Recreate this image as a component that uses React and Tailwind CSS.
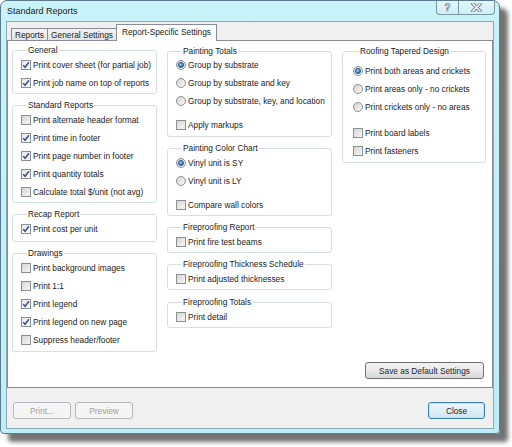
import React from "react";

function Check({ checked }) {
  return (
    <span
      className={
        "w-[10px] h-[10px] border border-[#8e8f8f] flex items-center justify-center shrink-0 " +
        (checked
          ? "bg-gradient-to-br from-[#e6e6e6] to-[#fbfbfb]"
          : "bg-gradient-to-br from-[#d6d6d6] to-[#f6f6f6]")
      }
    >
      {checked && (
        <svg width="8" height="8" viewBox="0 0 8 8">
          <path d="M1.2 4.2 L3.1 6.3 L6.9 1.3" stroke="#3a5095" strokeWidth="1.5" fill="none" />
        </svg>
      )}
    </span>
  );
}

function Radio({ checked }) {
  return (
    <span className="w-[10px] h-[10px] rounded-full border border-[#8e8f8f] bg-gradient-to-br from-[#d4d4d4] to-[#f8f8f8] flex items-center justify-center shrink-0">
      {checked && (
        <span className="w-[6px] h-[6px] rounded-full border border-[#1d4f8c] bg-[radial-gradient(circle_at_40%_35%,#a6e0ff,#2a72c4_70%)]" />
      )}
    </span>
  );
}

function Row({ radio, checked, children, className = "" }) {
  return (
    <div className={"h-[18px] flex items-center gap-[2px] " + className}>
      {radio ? <Radio checked={checked} /> : <Check checked={checked} />}
      <span className="whitespace-nowrap">{children}</span>
    </div>
  );
}

function Group({ title, className = "", children }) {
  return (
    <fieldset className={"border border-[#d5dfe5] rounded-[3px] min-w-0 " + className}>
      <legend className="ml-[6px] px-[1px] leading-[10px]">{title}</legend>
      {children}
    </fieldset>
  );
}

export default function App() {
  return (
    <div className="w-[512px] h-[447px] bg-white font-['Liberation_Sans',Arial,sans-serif] text-[8.3px] text-[#222222]">
      <div className="w-[500px] h-[434px] rounded-t-[7px] rounded-b-[4px] border border-[#5a7b8b] bg-gradient-to-b from-[#c9f2f9] to-[#bdeef7] shadow-[8px_8px_4px_rgba(0,0,0,0.55)] flex flex-col">
        {/* Title bar */}
        <div className="h-[20px] flex items-start justify-between shrink-0">
          <span className="ml-[6px] mt-[5px] text-[9px] leading-[11px] text-[#1b1b1b]">Standard Reports</span>
          <div className="mr-[4px] flex h-[14px] border border-t-0 border-[#7a97a3] rounded-b-[4px] bg-gradient-to-b from-[#e2f7fb] to-[#cdeff6] overflow-hidden">
            <div className="w-[22px] h-full flex items-center justify-center border-r border-[#7a97a3]">
              <span className="text-[10px] leading-[10px] font-bold text-[#f2f6f7] [-webkit-text-stroke:0.6px_#6b777e]">?</span>
            </div>
            <div className="w-[35px] h-full flex items-center justify-center">
              <svg width="11" height="9" viewBox="0 0 11 9">
                <path d="M2 1 L9 8 M9 1 L2 8" stroke="#6b777e" strokeWidth="3.2" strokeLinecap="square" fill="none" />
                <path d="M2 1 L9 8 M9 1 L2 8" stroke="#f2f6f7" strokeWidth="1.6" strokeLinecap="square" fill="none" />
              </svg>
            </div>
          </div>
        </div>

        {/* Client area */}
        <div className="mx-[5px] mb-[4px] flex-1 border border-[#8ba8b6] bg-[#f0f0f0] flex flex-col min-h-0">
          {/* Tab strip */}
          <div className="h-[18px] pl-[4px] flex items-end shrink-0">
            <div className="w-[37px] h-[12px] border border-b-0 border-[#898c95] bg-gradient-to-b from-[#f4f4f4] to-[#e3e3e3] flex items-center justify-center leading-[10px]">
              Reports
            </div>
            <div className="-ml-px w-[70px] h-[12px] border border-b-0 border-[#898c95] bg-gradient-to-b from-[#f4f4f4] to-[#e3e3e3] flex items-center justify-center leading-[10px]">
              General Settings
            </div>
            <div className="-ml-px relative z-10 -mb-px w-[101px] h-[17px] border border-b-0 border-[#898c95] bg-white flex items-center justify-center leading-[10px] pb-[2px]">
              Report-Specific Settings
            </div>
          </div>

          {/* Panel */}
          <div className="flex-1 border border-[#898c95] bg-white pl-[4px] pt-[5px] pb-[8px] flex gap-[10px] min-h-0">
            {/* Left column */}
            <div className="w-[145px] flex flex-col gap-[6px] -mt-px">
              <Group title="General" className="pl-[8px] pt-[1px] pb-[1px]">
                <Row checked>Print cover sheet (for partial job)</Row>
                <Row checked>Print job name on top of reports</Row>
              </Group>
              <Group title="Standard Reports" className="pl-[8px] pt-[1px] pb-[1px]">
                <Row>Print alternate header format</Row>
                <Row checked>Print time in footer</Row>
                <Row checked>Print page number in footer</Row>
                <Row checked>Print quantity totals</Row>
                <Row>Calculate total $/unit (not avg)</Row>
              </Group>
              <Group title="Recap Report" className="pl-[8px] pt-[1px] pb-[3px]">
                <Row checked>Print cost per unit</Row>
              </Group>
              <Group title="Drawings" className="pl-[8px] pt-[1px] pb-[2px]">
                <Row>Print background images</Row>
                <Row>Print 1:1</Row>
                <Row checked>Print legend</Row>
                <Row checked>Print legend on new page</Row>
                <Row>Suppress header/footer</Row>
              </Group>
            </div>

            {/* Middle column */}
            <div className="w-[165px] flex flex-col gap-[6px]">
              <Group title="Painting Totals" className="pl-[8px] pt-0 pb-[2px]">
                <Row radio checked>Group by substrate</Row>
                <Row radio>Group by substrate and key</Row>
                <Row radio>Group by substrate, key, and location</Row>
                <Row className="mt-[6px]">Apply markups</Row>
              </Group>
              <Group title="Painting Color Chart" className="pl-[8px] pt-[1px] pb-[1px]">
                <Row radio checked>Vinyl unit is SY</Row>
                <Row radio>Vinyl unit is LY</Row>
                <Row className="mt-[6px]">Compare wall colors</Row>
              </Group>
              <Group title="Fireproofing Report" className="pl-[8px] pt-[1px] pb-[1px]">
                <Row>Print fire test beams</Row>
              </Group>
              <Group title="Fireproofing Thickness Schedule" className="pl-[8px] pt-[1px] pb-[1px]">
                <Row>Print adjusted thicknesses</Row>
              </Group>
              <Group title="Fireproofing Totals" className="pl-[8px] pt-[1px] pb-[1px] mt-px">
                <Row>Print detail</Row>
              </Group>
            </div>

            {/* Right column */}
            <div className="w-[144px] flex flex-col justify-between">
              <Group title="Roofing Tapered Design" className="pl-[10px] pt-[6px] pb-[2px]">
                <Row radio checked>Print both areas and crickets</Row>
                <Row radio>Print areas only - no crickets</Row>
                <Row radio>Print crickets only - no areas</Row>
                <Row className="mt-[8px]">Print board labels</Row>
                <Row>Print fasteners</Row>
              </Group>
              <button className="self-end mr-[2px] w-[119px] h-[17px] rounded-[3px] border border-[#707070] bg-gradient-to-b from-[#f3f3f3] via-[#e9e9e9] to-[#d6d6d6] flex items-center justify-center leading-[10px] text-[#1e1e1e]">
                Save as Default Settings
              </button>
            </div>
          </div>

          {/* Footer */}
          <div className="h-[40px] shrink-0 pl-[6px] pr-[8px] pt-[14px] flex items-start">
            <button className="w-[58px] h-[17px] rounded-[3px] border border-[#b5b9bc] bg-[#f4f4f4] text-[#a2a2a2] flex items-center justify-center leading-[10px]">
              Print...
            </button>
            <button className="ml-[4px] w-[58px] h-[17px] rounded-[3px] border border-[#b5b9bc] bg-[#f4f4f4] text-[#a2a2a2] flex items-center justify-center leading-[10px]">
              Preview
            </button>
            <button className="ml-auto w-[57px] h-[17px] rounded-[3px] border border-[#3c7fb1] bg-gradient-to-b from-[#eaf6fd] via-[#e0eff8] to-[#cfe4f1] shadow-[inset_0_0_0_1px_#bfe6f7] flex items-center justify-center leading-[10px] text-[#1e1e1e]">
              Close
            </button>
          </div>
        </div>
      </div>
    </div>
  );
}
